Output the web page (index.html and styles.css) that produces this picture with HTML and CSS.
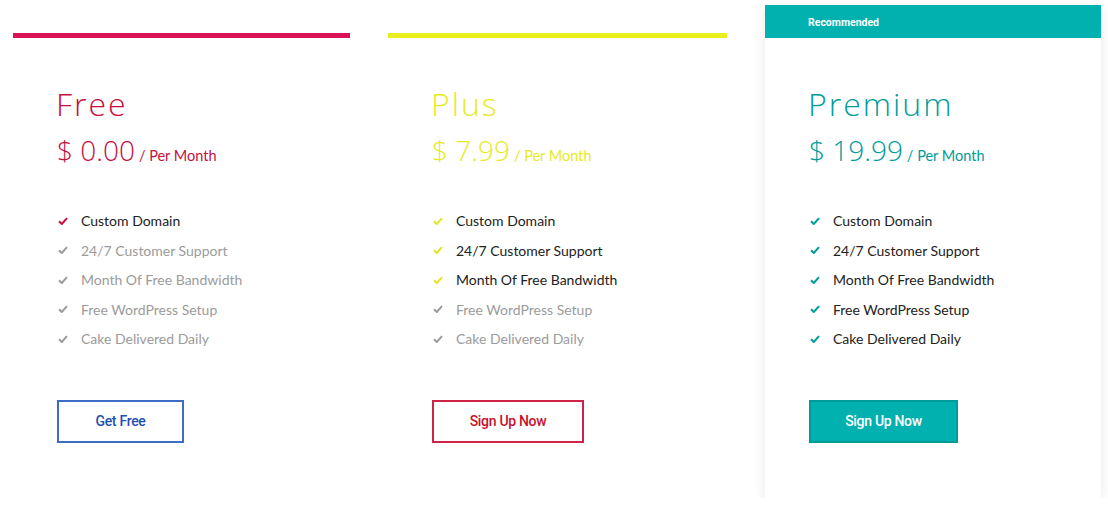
FILE: index.html
```html
<!DOCTYPE html>
<html lang="en">

<head>
    <meta charset="UTF-8">
    <title>Pricing</title>
    <link rel="stylesheet" href="styles.css">
</head>

<body>

    <section class="planer">

        <article class="plan free">
            <div class="bar"></div>
            <div class="indhold">
                <h2>Free</h2>
                <p class="pris">$ 0.00<span>/ Per Month</span></p>
                <ul>
                    <li class="med"><svg viewBox="0 0 10 8"><path d="M1 4.2 L3.8 7 L9 1.2"/></svg>Custom Domain</li>
                    <li><svg viewBox="0 0 10 8"><path d="M1 4.2 L3.8 7 L9 1.2"/></svg>24/7 Customer Support</li>
                    <li><svg viewBox="0 0 10 8"><path d="M1 4.2 L3.8 7 L9 1.2"/></svg>Month Of Free Bandwidth</li>
                    <li><svg viewBox="0 0 10 8"><path d="M1 4.2 L3.8 7 L9 1.2"/></svg>Free WordPress Setup</li>
                    <li><svg viewBox="0 0 10 8"><path d="M1 4.2 L3.8 7 L9 1.2"/></svg>Cake Delivered Daily</li>
                </ul>
                <button>Get Free</button>
            </div>
        </article>

        <article class="plan plus">
            <div class="bar"></div>
            <div class="indhold">
                <h2>Plus</h2>
                <p class="pris">$ 7.99<span>/ Per Month</span></p>
                <ul>
                    <li class="med"><svg viewBox="0 0 10 8"><path d="M1 4.2 L3.8 7 L9 1.2"/></svg>Custom Domain</li>
                    <li class="med"><svg viewBox="0 0 10 8"><path d="M1 4.2 L3.8 7 L9 1.2"/></svg>24/7 Customer Support</li>
                    <li class="med"><svg viewBox="0 0 10 8"><path d="M1 4.2 L3.8 7 L9 1.2"/></svg>Month Of Free Bandwidth</li>
                    <li><svg viewBox="0 0 10 8"><path d="M1 4.2 L3.8 7 L9 1.2"/></svg>Free WordPress Setup</li>
                    <li><svg viewBox="0 0 10 8"><path d="M1 4.2 L3.8 7 L9 1.2"/></svg>Cake Delivered Daily</li>
                </ul>
                <button>Sign Up Now</button>
            </div>
        </article>

        <article class="plan premium">
            <div class="banner">Recommended</div>
            <div class="indhold">
                <h2>Premium</h2>
                <p class="pris">$ 19.99<span>/ Per Month</span></p>
                <ul>
                    <li class="med"><svg viewBox="0 0 10 8"><path d="M1 4.2 L3.8 7 L9 1.2"/></svg>Custom Domain</li>
                    <li class="med"><svg viewBox="0 0 10 8"><path d="M1 4.2 L3.8 7 L9 1.2"/></svg>24/7 Customer Support</li>
                    <li class="med"><svg viewBox="0 0 10 8"><path d="M1 4.2 L3.8 7 L9 1.2"/></svg>Month Of Free Bandwidth</li>
                    <li class="med"><svg viewBox="0 0 10 8"><path d="M1 4.2 L3.8 7 L9 1.2"/></svg>Free WordPress Setup</li>
                    <li class="med"><svg viewBox="0 0 10 8"><path d="M1 4.2 L3.8 7 L9 1.2"/></svg>Cake Delivered Daily</li>
                </ul>
                <button>Sign Up Now</button>
            </div>
        </article>

    </section>

</body>

</html>
```

FILE: styles.css
```css
body {
    margin: 0px;
    background-color: #ffffff;
    font-family: "Lato", sans-serif;
}

.planer {
    display: grid;
    grid-template-columns: 337px 339px 336px;
    grid-gap: 38px;
    padding: 5px 0px 0px 13px;
    align-items: start;
}

.bar {
    height: 5px;
    margin-top: 28px;
}

.banner {
    height: 33px;
    box-sizing: border-box;
    padding: 12px 0px 0px 43px;
    background-color: #00b1b0;
    color: #ffffff;
    font-family: "Roboto", sans-serif;
    font-weight: 700;
    font-size: 10.5px;
    line-height: 12px;
}

.indhold {
    padding: 48px 0px 55px 44px;
}

h2 {
    margin: 0px;
    margin-left: -1px;
    font-family: "Open Sans", sans-serif;
    font-weight: 300;
    font-size: 32px;
    line-height: 36px;
    letter-spacing: 2px;
}

.pris {
    margin: 11px 0px 0px 0px;
    font-family: "Open Sans", sans-serif;
    font-weight: 300;
    font-size: 28px;
    line-height: 34px;
}

.pris span {
    margin-left: 4px;
    font-family: "Lato", sans-serif;
    font-weight: 400;
    font-size: 14.5px;
}

ul {
    list-style: none;
    margin: 33px 0px 0px 0px;
    padding: 0px;
}

li {
    display: flex;
    align-items: center;
    height: 29.5px;
    font-size: 14px;
    color: #9b9b9b;
}

li svg {
    width: 10px;
    height: 8px;
    margin: 0px 13px 0px 1px;
    fill: none;
    stroke: #9b9b9b;
    stroke-width: 2;
}

li.med {
    color: #222222;
}

button {
    margin-top: 46px;
    height: 43px;
    padding: 0px;
    background: none;
    border: 2px solid;
    font-family: "Roboto", sans-serif;
    font-weight: 500;
    font-size: 14px;
    letter-spacing: -0.3px;
    cursor: pointer;
}

/* farver pr. plan */

.free .bar {
    background-color: #da1256;
}

.free h2,
.free .pris {
    color: #c5103f;
}

.free li.med svg {
    stroke: #c5103f;
}

.free button {
    width: 127px;
    border-color: #3d6cc9;
    color: #1f4fb5;
}

.plus .bar {
    background-color: #eaee1f;
}

.plus h2,
.plus .pris {
    color: #e6ea26;
}

.plus li.med svg {
    stroke: #e2e622;
}

.plus button {
    width: 152px;
    border-color: #cf2447;
    color: #c8102e;
}

.premium {
    box-shadow: 0px 3px 12px rgba(0, 0, 0, 0.09);
}

.premium h2,
.premium .pris {
    color: #009c9a;
}

.premium li.med svg {
    stroke: #009c9a;
}

.premium button {
    width: 149px;
    background-color: #00b1b0;
    border-color: #009c9a;
    color: #ffffff;
}
```
